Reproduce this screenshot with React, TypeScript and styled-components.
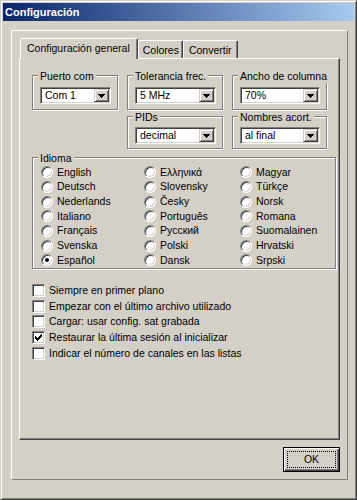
import React from "react";
import styled, { createGlobalStyle } from "styled-components";

const GlobalStyle = createGlobalStyle`
  html, body {
    margin: 0;
    padding: 0;
    background: #d4d0c8;
  }
  body {
    font-family: "Liberation Sans", Arial, sans-serif;
    font-size: 10.5px;
    color: #000;
  }
  * {
    box-sizing: border-box;
  }
`;

const Window = styled.div`
  width: 357px;
  height: 500px;
  display: flex;
  flex-direction: column;
  padding: 2px;
  background: #d4d0c8;
  border: 1px solid;
  border-color: #d4d0c8 #404040 #404040 #d4d0c8;
  box-shadow: inset 1px 1px #fff, inset -1px -1px #808080;
`;

const TitleBar = styled.div`
  height: 18px;
  display: flex;
  align-items: center;
  padding-left: 2px;
  background: linear-gradient(to right, #0a246a, #a6caf0);
  color: #fff;
  font-weight: bold;
  font-size: 11px;
  line-height: 13px;
`;

const Body = styled.div`
  padding: 9px 6px 0 8px;
`;

const Frame = styled.div`
  width: 337px;
  height: 450px;
  display: flex;
  flex-direction: column;
  padding: 7px;
  border: 1px solid;
  border-color: #fff #808080 #808080 #fff;
`;

const TabRow = styled.div`
  height: 20px;
  display: flex;
  align-items: flex-end;
  padding-left: 1px;
`;

const Tab = styled.div<{ $active?: boolean; $pad: string }>`
  position: relative;
  z-index: ${(p) => (p.$active ? 1 : 0)};
  height: ${(p) => (p.$active ? 21 : 18)}px;
  margin-bottom: ${(p) => (p.$active ? -1 : 0)}px;
  padding: ${(p) => p.$pad};
  padding-top: 3px;
  line-height: 13px;
  white-space: nowrap;
  background: #d4d0c8;
  border: 1px solid;
  border-bottom: none;
  border-color: #fff #404040 transparent #fff;
  border-radius: 2px 2px 0 0;
  box-shadow: inset -1px 0 #808080;
`;

const Panel = styled.div`
  width: 321px;
  height: 382px;
  padding: 16px 0 0 12px;
  border: 1px solid;
  border-color: #fff #404040 #404040 #fff;
  box-shadow: inset -1px -1px #808080;
`;

const GroupGrid = styled.div`
  display: grid;
  grid-template-columns: 86px 96px 95px;
  grid-template-rows: 35px 33px;
  column-gap: 9px;
  row-gap: 6px;
`;

const GroupBox = styled.div<{ $col?: number; $top: number }>`
  position: relative;
  grid-column: ${(p) => p.$col ?? "auto"};
  padding: ${(p) => p.$top}px 6px 0 7px;
  border: 1px solid #808080;
  box-shadow: inset 1px 1px #fff, 1px 1px #fff;
`;

const GroupLabel = styled.span`
  position: absolute;
  top: -6px;
  left: 5px;
  padding: 0 2px;
  line-height: 13px;
  white-space: nowrap;
  background: #d4d0c8;
`;

const Combo = styled.div`
  height: 17px;
  display: flex;
  align-items: center;
  padding: 1px;
  background: #fff;
  border: 1px solid;
  border-color: #808080 #fff #fff #808080;
  box-shadow: inset 1px 1px #404040, inset -1px -1px #d4d0c8;
`;

const ComboText = styled.span`
  flex: 1;
  padding-left: 3px;
  line-height: 13px;
  white-space: nowrap;
`;

const DropButton = styled.div`
  width: 15px;
  height: 100%;
  display: flex;
  align-items: center;
  justify-content: center;
  background: #d4d0c8;
  border: 1px solid;
  border-color: #d4d0c8 #404040 #404040 #d4d0c8;
  box-shadow: inset 1px 1px #fff, inset -1px -1px #808080;
`;

const LanguageBox = styled.div`
  position: relative;
  width: 304px;
  height: 112px;
  margin-top: 8px;
  padding: 7px 0 0 8px;
  border: 1px solid #808080;
  box-shadow: inset 1px 1px #fff, 1px 1px #fff;
`;

const RadioGrid = styled.div`
  display: grid;
  grid-template-columns: 103px 96px 1fr;
  grid-template-rows: repeat(7, 14.67px);
  grid-auto-flow: column;
`;

const Option = styled.label`
  display: flex;
  align-items: center;
  gap: 4px;
  line-height: 13px;
  white-space: nowrap;
`;

const RadioCircle = styled.span`
  width: 12px;
  height: 12px;
  display: flex;
  align-items: center;
  justify-content: center;
  flex-shrink: 0;
  border-radius: 50%;
  background: #fff;
  border: 1px solid;
  border-color: #808080 #fff #fff #808080;
  box-shadow: inset 1px 1px #404040, inset -1px -1px #d4d0c8;
`;

const RadioDot = styled.span`
  width: 4px;
  height: 4px;
  border-radius: 50%;
  background: #000;
`;

const CheckList = styled.div`
  display: grid;
  grid-auto-rows: 15.6px;
  margin-top: 14px;
`;

const CheckBox = styled.span`
  width: 13px;
  height: 13px;
  display: flex;
  align-items: center;
  justify-content: center;
  flex-shrink: 0;
  background: #fff;
  border: 1px solid;
  border-color: #808080 #fff #fff #808080;
  box-shadow: inset 1px 1px #404040, inset -1px -1px #d4d0c8;
`;

const Footer = styled.div`
  display: flex;
  justify-content: flex-end;
  margin-top: 7px;
`;

const OkButton = styled.div`
  width: 57px;
  height: 25px;
  display: flex;
  padding: 3px;
  border: 1px solid #000;
  box-shadow: inset 1px 1px #fff, inset -1px -1px #404040, inset -2px -2px #808080;
`;

const FocusRing = styled.span`
  flex: 1;
  display: flex;
  align-items: center;
  justify-content: center;
  border: 1px dotted #000;
  line-height: 13px;
`;

const Arrow = () => (
  <svg width="7" height="4" viewBox="0 0 7 4">
    <path d="M0 0H7V1H6V2H5V3H4V4H3V3H2V2H1V1H0Z" fill="#000" />
  </svg>
);

const Check = () => (
  <svg width="7" height="7" viewBox="0 0 7 7">
    <path d="M6 0H7V3H6V4H5V5H4V6H3V7H2V6H1V5H0V2H1V3H2V4H3V3H4V2H5V1H6Z" fill="#000" />
  </svg>
);

const Dropdown = ({ value }: { value: string }) => (
  <Combo>
    <ComboText>{value}</ComboText>
    <DropButton>
      <Arrow />
    </DropButton>
  </Combo>
);

const languages = [
  "English",
  "Deutsch",
  "Nederlands",
  "Italiano",
  "Français",
  "Svenska",
  "Español",
  "Ελληνικά",
  "Slovensky",
  "Česky",
  "Português",
  "Русский",
  "Polski",
  "Dansk",
  "Magyar",
  "Türkçe",
  "Norsk",
  "Romana",
  "Suomalainen",
  "Hrvatski",
  "Srpski",
];

const options = [
  { label: "Siempre en primer plano", checked: false },
  { label: "Empezar con el último archivo utilizado", checked: false },
  { label: "Cargar: usar config. sat grabada", checked: false },
  { label: "Restaurar la última sesión al inicializar", checked: true },
  { label: "Indicar el número de canales en las listas", checked: false },
];

const App = () => {
  return (
    <>
      <GlobalStyle />
      <Window>
        <TitleBar>Configuración</TitleBar>
        <Body>
          <Frame>
            <TabRow>
              <Tab $active $pad="0 7px 0 6px">
                Configuración general
              </Tab>
              <Tab $pad="0 3px 0 4px">Colores</Tab>
              <Tab $pad="0 5px">Convertir</Tab>
            </TabRow>
            <Panel>
              <GroupGrid>
                <GroupBox $top={11}>
                  <GroupLabel>Puerto com</GroupLabel>
                  <Dropdown value="Com 1" />
                </GroupBox>
                <GroupBox $top={11}>
                  <GroupLabel>Tolerancia frec.</GroupLabel>
                  <Dropdown value="5 MHz" />
                </GroupBox>
                <GroupBox $top={11}>
                  <GroupLabel>Ancho de columna</GroupLabel>
                  <Dropdown value="70%" />
                </GroupBox>
                <GroupBox $col={2} $top={10}>
                  <GroupLabel>PIDs</GroupLabel>
                  <Dropdown value="decimal" />
                </GroupBox>
                <GroupBox $col={3} $top={10}>
                  <GroupLabel>Nombres acort.</GroupLabel>
                  <Dropdown value="al final" />
                </GroupBox>
              </GroupGrid>

              <LanguageBox>
                <GroupLabel>Idioma</GroupLabel>
                <RadioGrid>
                  {languages.map((lang) => (
                    <Option key={lang}>
                      <RadioCircle>{lang === "Español" && <RadioDot />}</RadioCircle>
                      {lang}
                    </Option>
                  ))}
                </RadioGrid>
              </LanguageBox>

              <CheckList>
                {options.map((o) => (
                  <Option key={o.label}>
                    <CheckBox>{o.checked && <Check />}</CheckBox>
                    {o.label}
                  </Option>
                ))}
              </CheckList>
            </Panel>
            <Footer>
              <OkButton>
                <FocusRing>OK</FocusRing>
              </OkButton>
            </Footer>
          </Frame>
        </Body>
      </Window>
    </>
  );
};

export default App;
